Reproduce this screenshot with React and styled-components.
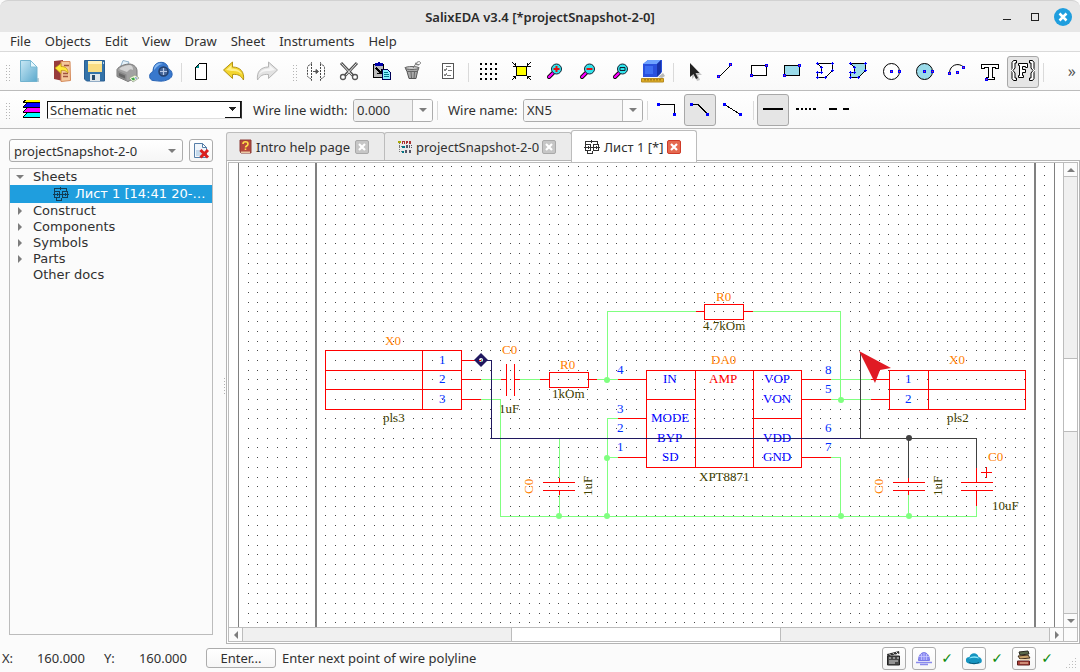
import React, { useState } from 'react';
import styled, { createGlobalStyle, css } from 'styled-components';

const chrome = '#fbfbfb';
const line = '#bcbcbc';
const softLine = '#dadada';
const ink = '#303030';
const accent = '#1f9ede';

const GlobalStyle = createGlobalStyle`
  * {
    box-sizing: border-box;
  }

  body {
    margin: 0;
    background: ${chrome};
    color: ${ink};
    font: 13px/16px "Noto Sans", "Open Sans", sans-serif;
  }

  button, input, select {
    font: inherit;
    color: inherit;
    margin: 0;
  }
`;

const Window = styled.div`
  display: flex;
  flex-direction: column;
  height: 100vh;
  min-height: 480px;
  background: ${chrome};
`;

const TitleBar = styled.header`
  display: grid;
  grid-template-columns: 1fr auto 1fr;
  align-items: center;
  height: 32px;
  flex: none;
  padding: 0 8px;
  background: #e7e7e7;
  border-top: 1px solid #d2d2d2;
  border-radius: 8px 8px 0 0;
`;

const Title = styled.h1`
  grid-column: 2;
  margin: 0;
  font-size: 13px;
  line-height: 16px;
  font-weight: 600;
  color: #2b2b2b;
`;

const WindowButtons = styled.div`
  display: flex;
  justify-content: flex-end;
  gap: 10px;
`;

const WindowButton = styled.button`
  width: 18px;
  height: 18px;
  padding: 0;
  border: 0;
  border-radius: 50%;
  background: ${(props) => (props.$close ? accent : 'transparent')};

  svg {
    display: block;
  }
`;

const MenuBar = styled.nav`
  display: flex;
  flex: none;
  height: 20px;
  padding-left: 3px;
  border-bottom: 1px solid ${softLine};
`;

const MenuItem = styled.button`
  padding: 0 7px 2px;
  border: 0;
  background: transparent;
  line-height: 16px;
`;

const ToolBar = styled.div`
  display: flex;
  align-items: center;
  flex: none;
  height: ${(props) => props.$height}px;
  padding: ${(props) => props.$top}px 0 0 5px;
  border-bottom: 1px solid ${line};
  background: linear-gradient(#ffffff, #f9f9f9);
  overflow: hidden;
`;

const Grip = styled.span`
  flex: none;
  width: 5px;
  height: 17px;
  margin: 0 3px 0 ${(props) => props.$before || 0}px;
  background: radial-gradient(circle, #b5b5b5 0 1px, transparent 1px) 0 0 / 3px 3px;
`;

const Separator = styled.span`
  flex: none;
  width: 1px;
  height: 19px;
  margin: 0 3px 0 4px;
  background: ${softLine};
`;

const ToolButton = styled.button`
  display: flex;
  flex: none;
  align-items: center;
  justify-content: center;
  width: 32px;
  height: 32px;
  margin-right: ${(props) => (props.$last ? 0 : 1)}px;
  padding: 0;
  border: 1px solid ${(props) => (props.$active ? '#a8a8a8' : 'transparent')};
  border-radius: 3px;
  background: ${(props) => (props.$active ? '#e5e5e5' : 'transparent')};
`;

const More = styled.button`
  margin: 0 4px 0 auto;
  padding: 0 0 3px;
  border: 0;
  background: transparent;
  font-size: 16px;
  line-height: 16px;
  color: #555;
`;

const LayerIcon = styled.span`
  display: flex;
  flex: none;
  width: 25px;
  margin-left: 9px;
  height: 20px;
`;

const NetSelect = styled.span`
  position: relative;
  flex: none;
  width: 195px;
  height: 18px;
  margin-right: 11px;
  border: 1px solid #111;
  border-right-color: #333;
  border-bottom-color: #ddd;
  background: #fff;

  select {
    display: block;
    appearance: none;
    width: 100%;
    height: 16px;
    padding: 0 0 0 2px;
    border: 0;
    background: transparent;
    line-height: 16px;
  }

  svg {
    position: absolute;
    right: 0;
    bottom: 0;
    pointer-events: none;
  }
`;

const FieldLabel = styled.label`
  flex: none;
  width: ${(props) => props.$width}px;
  padding-left: ${(props) => props.$indent || 0}px;
  white-space: nowrap;
`;

const ComboField = styled.span`
  display: flex;
  flex: none;
  width: ${(props) => props.$width}px;
  height: 23px;
  border: 1px solid #acacac;
  border-radius: 3px;
  overflow: hidden;
  background: #fff;

  input {
    flex: 1;
    min-width: 0;
    padding: 0 3px;
    border: 0;
    background: ${(props) => (props.$grey ? '#f1f1f1' : '#f7f7f7')};
  }

  button {
    width: 20px;
    padding: 0;
    border: 0;
    border-left: 1px solid ${line};
    background: ${chrome};
  }

  button svg {
    display: block;
    margin: auto;
  }
`;

const Body = styled.main`
  display: flex;
  flex: 1;
  min-height: 0;
`;

const Side = styled.aside`
  display: flex;
  flex-direction: column;
  flex: none;
  width: 226px;
  padding: 10px 13px 9px 9px;
`;

const SideHead = styled.div`
  display: flex;
  gap: 6px;
  margin-bottom: 6px;
`;

const ProjectSelect = styled.span`
  display: flex;
  align-items: center;
  flex: 1;
  height: 23px;
  border: 1px solid #acacac;
  border-radius: 3px;
  background: linear-gradient(#ffffff, #f6f6f6);

  select {
    appearance: none;
    flex: 1;
    min-width: 0;
    padding: 0 4px;
    border: 0;
    background: transparent;
  }

  svg {
    flex: none;
    margin-right: 6px;
  }
`;

const SmallButton = styled.button`
  display: flex;
  align-items: center;
  justify-content: center;
  flex: none;
  width: 24px;
  height: 23px;
  padding: 0;
  border: 1px solid #acacac;
  border-radius: 3px;
  background: linear-gradient(#ffffff, #f6f6f6);
`;

const Tree = styled.ul`
  flex: 1;
  margin: 0;
  padding: 0;
  list-style: none;
  border: 1px solid ${line};
  background: #fbfbfb;
  font-family: "DejaVu Sans", sans-serif;
`;

const TreeRow = styled.li`
  display: flex;
  align-items: center;
  height: ${(props) => (props.$selected ? 18 : 16)}px;
  padding-left: ${(props) => (props.$nested ? 43 : 6)}px;
  white-space: nowrap;
  ${(props) =>
    props.$selected &&
    css`
      background: ${accent};
      color: #fff;
    `}
`;

const Twisty = styled.span`
  display: flex;
  flex: none;
  width: 17px;
`;

const RowIcon = styled.span`
  display: flex;
  margin-right: 6px;
  color: #123c55;
`;

const Work = styled.section`
  display: flex;
  flex-direction: column;
  flex: 1;
  min-width: 0;
`;

// The strip overlaps the frame so that the active tab opens onto the sheet
const TabStrip = styled.div`
  display: flex;
  align-items: flex-end;
  flex: none;
  height: 33px;
  margin-bottom: -2px;
`;

const Tab = styled.div`
  display: flex;
  align-items: center;
  z-index: ${(props) => (props.$active ? 1 : 0)};
  width: ${(props) => props.$width}px;
  height: ${(props) => (props.$active ? 32 : 28)}px;
  margin-bottom: ${(props) => (props.$active ? 0 : 2)}px;
  margin-left: ${(props) => (props.$first ? 0 : -1)}px;
  padding-left: 12px;
  border: 1px solid ${line};
  border-bottom: 0;
  border-radius: 3px 3px 0 0;
  background: ${(props) => (props.$active ? '#ffffff' : '#ebebeb')};
`;

const TabLabel = styled.button`
  display: flex;
  align-items: center;
  gap: 4px;
  flex: none;
  padding: 0;
  border: 0;
  background: transparent;
  white-space: nowrap;

  svg {
    flex: none;
  }
`;

const TabClose = styled.button`
  display: flex;
  align-items: center;
  justify-content: center;
  flex: none;
  width: 14px;
  height: 14px;
  margin: 0 15px 0 auto;
  padding: 0;
  border: 1px solid ${(props) => (props.$active ? '#cf3a27' : '#a9a9a9')};
  border-radius: 2px;
  background: ${(props) => (props.$active ? '#e5694f' : '#c6c6c6')};
`;

const Frame = styled.div`
  flex: 1;
  min-height: 0;
  padding: 1px;
  border: 1px solid #b4b4b4;
  background: #fff;
`;

const Viewport = styled.div`
  display: grid;
  grid-template-columns: 1fr 14px;
  grid-template-rows: 1fr 14px;
  height: 100%;
  border: 1px solid ${line};
`;

const Canvas = styled.svg`
  display: block;
  width: 100%;
  height: 100%;
  min-width: 0;
  min-height: 0;
  overflow: hidden;
  font: 13px "Liberation Serif", serif;
`;

const ScrollBar = styled.div`
  display: flex;
  min-width: 0;
  min-height: 0;
  flex-direction: ${(props) => (props.$vertical ? 'column' : 'row')};
  border-${(props) => (props.$vertical ? 'left' : 'top')}: 1px solid ${line};
  background: #fbfbfb;
`;

const ScrollCorner = styled.div`
  border: solid ${line};
  border-width: 1px 0 0 1px;
  background: #fbfbfb;
`;

const ScrollArrow = styled.button`
  display: flex;
  align-items: center;
  justify-content: center;
  flex: none;
  width: 13px;
  height: 13px;
  padding: 0;
  border: 0;
  background: transparent;
`;

const Groove = styled.div`
  flex: ${(props) => props.$grow} 1 0;
  border: 0 solid ${line};
  border-width: ${(props) => (props.$vertical ? '1px 0' : '0 1px')};
  background: ${(props) => (props.$thumb ? '#ffffff' : '#f0f0f0')};
  ${(props) => props.$thumb && 'border-width: 0;'}
`;

const SplitHandle = styled.div`
  flex: none;
  align-self: center;
  width: 1px;
  height: 18px;
  margin-left: -2px;
  margin-right: 1px;
  background: repeating-linear-gradient(#b0b0b0 0 1px, transparent 1px 3px);
`;

const StatusBar = styled.footer`
  display: flex;
  align-items: center;
  flex: none;
  height: 28px;
  padding: 0 2px;
  white-space: nowrap;
`;

const Coordinate = styled.output`
  display: flex;
  justify-content: space-between;
  width: 83px;
  margin-right: 19px;
`;

const EnterButton = styled.button`
  width: 70px;
  height: 20px;
  margin-right: 6px;
  padding: 0;
  border: 1px solid #acacac;
  border-radius: 3px;
  background: linear-gradient(#ffffff, #f6f6f6);
  line-height: 16px;
`;

const StatusTools = styled.div`
  display: flex;
  align-items: center;
  margin-left: auto;
`;

const Check = styled.span`
  width: 26px;
  padding-right: 4px;
  text-align: center;
  font: 14px/16px "DejaVu Sans", sans-serif;
  color: #0a8a0a;
`;

const StatusButton = styled(SmallButton)`
  margin-right: ${(props) => (props.$gap ? 6 : 0)}px;
`;

const SizeGrip = styled.svg`
  flex: none;
  margin-left: 3px;
  align-self: flex-end;
`;

const Icon = ({ children, size = 24, height, crisp }) => (
  <svg
    width={size}
    height={height || size}
    viewBox={`0 0 ${size} ${height || size}`}
    fill="none"
    shapeRendering={crisp ? 'crispEdges' : undefined}
    aria-hidden="true"
  >
    {children}
  </svg>
);

const Caret = ({ dir = 'down', size = 8, color = '#7d7d7d' }) => (
  <svg width={size} height={size} viewBox="0 0 8 8" fill={color} aria-hidden="true">
    {dir === 'down' && <path d="M0 2h8L4 6z" />}
    {dir === 'up' && <path d="M0 6h8L4 2z" />}
    {dir === 'left' && <path d="M6 0v8L2 4z" />}
    {dir === 'right' && <path d="M2 0v8l4-4z" />}
  </svg>
);

// Small square handle drawn at the vertices of the drawing tools
const Knob = ({ x, y, red }) => (
  <g shapeRendering="crispEdges">
    <rect x={x - 1} y={y - 1} width="3" height="3" fill="#00f" />
    {red && <rect x={x} y={y} width="1" height="1" fill="#f33" />}
  </g>
);

const Lens = ({ children }) => (
  <Icon>
    <path d="M7 17l4-4" stroke="#000" strokeWidth="4" strokeLinecap="round" />
    <path d="M7 17l4-4" stroke="#f0f" strokeWidth="2.400" strokeLinecap="round" />
    <circle cx="14.500" cy="9" r="5" fill="#2fe3ea" stroke="#123" />
    {children}
  </Icon>
);

const polyOutline = 'M4.500 3.500h15v7l-7 7h-8v-5h4v-5z';
const polyHandles =
  'M3 3.500h3M4.500 2v3M18 3.500h3M19.500 2v3M18 10.500h3M19.500 9v3M11 17.500h3M12.500 16v3M3 17.500h3M4.500 16v3M3 12.500h3M4.500 11v3M7 12.500h3M8.500 11v3M7 7.500h3M8.500 6v3';

const icons = {
  new: (
    <Icon>
      <defs>
        <linearGradient id="page" x1="0" y1="0" x2="1" y2="1">
          <stop offset="0" stopColor="#c9e8f5" />
          <stop offset="1" stopColor="#5ba9cd" />
        </linearGradient>
      </defs>
      <path d="M5 20l17-2v4H5z" fill="#b9cdd5" />
      <path d="M3.500.500h10l6.500 6.500v14.500h-16.500z" fill="url(#page)" stroke="#72b3cf" />
      <path d="M13.500.500V7H20z" fill="#e6f7fd" stroke="#7dbcd6" />
    </Icon>
  ),
  close: (
    <Icon>
      <path d="M4 1l9-1v21l-9-2z" fill="#983c3c" />
      <path d="M11 1.500h9l.5 19-9.500 1z" fill="#f4c79a" stroke="#d58a5a" />
      <path d="M13 13.500h5M13 16.500h5M14 5.500h5" stroke="#a0523c" strokeWidth="1.500" />
      <path d="M5 8l6-4.500v3c5 0 7 2.500 7 6.500-2-2.500-4-3-7-2.500v3z" fill="#ffe93b" stroke="#c29a18" strokeWidth=".8" />
    </Icon>
  ),
  save: (
    <Icon>
      <path d="M1.500.500h20v20.500h-18l-2-2z" fill="#3473a9" stroke="#2a5f92" />
      <path d="M5 1h14v11H5z" fill="#f9dd82" />
      <path d="M5 1h14v3H5z" fill="#fff4be" />
      <path d="M7 14h10v7H7z" fill="#dfe6ea" />
      <path d="M9 15h3v5H9z" fill="#274b6b" />
      <path d="M20 2h1v2h-1z" fill="#bcd6ec" />
    </Icon>
  ),
  print: (
    <Icon>
      <path d="M4 8l3-7.500L13 2l-3 7z" fill="#e6f2fa" stroke="#91b1c8" />
      <path d="M1 9.500C3 6 9 4 14 4c5 1 7 4 7 7v6l-9 4.500-11-5z" fill="#a2a2a2" stroke="#777" />
      <path d="M3 9c3-3 8-4 11-4 3 1 3 3 3 5-3-2-4 0-6 2z" fill="#d3d3d3" />
      <path d="M1.500 10.500l9 4v6l-9-4z" fill="#8a8a8a" />
      <path d="M3 13l6 2.500v3L3 16z" fill="#666" />
      <path d="M13 18l6-3 4 3-6 4z" fill="#eef5d8" stroke="#8d9a86" strokeWidth=".7" />
      <path d="M15 18.500l3-1 1 2-2 1z" fill="#3aa648" />
      <path d="M19 17l2 1-1 1z" fill="#3661dd" />
    </Icon>
  ),
  cloud: (
    <Icon>
      <path d="M4 20.500c-4-.5-5-7 0-9 0-7 5-10 10-9 4 1 5 4 5 6 5 2 6 9 0 11-5 2.500-9 1.500-15 1z" fill="#3878cd" stroke="#2864b5" />
      <path d="M5 10c0-6 5-8 9-6-4 0-6 3-9 6z" fill="#83b6f0" />
      <circle cx="14.500" cy="11.500" r="4.500" fill="#46679b" stroke="#24406d" strokeWidth="1.500" />
      <path d="M14.500 8v7M11 11.500h7" stroke="#b8c9e6" strokeWidth="1.200" />
    </Icon>
  ),
  blank: (
    <Icon crisp>
      <path d="M10.500 3.500h7v16h-11v-12z" fill="#fff" stroke="#000" />
      <path d="M7 7l3-3v4H7z" fill="#088" />
    </Icon>
  ),
  undo: (
    <Icon>
      <path d="M1.500 10l9-8v5c8 0 12 5 11 13-3-4.500-5-6-11-5.500v4z" fill="#f3d52e" stroke="#b39314" />
      <path d="M4 10l5.500-5v3.500c5 0 9 2 10.500 6-3-3-6-4-10.500-3.500z" fill="#fff08a" />
    </Icon>
  ),
  redo: (
    <Icon>
      <path d="M22.500 10l-9-8v5c-8 0-12 5-11 13 3-4.500 5-6 11-5.500v4z" fill="#e2e2e2" stroke="#b5b5b5" />
      <path d="M20 10l-5.500-5v3.500c-5 0-9 2-10.500 6 3-3 6-4 10.500-3.500z" fill="#f6f6f6" />
    </Icon>
  ),
  mirror: (
    <Icon>
      <path d="M7.500 2.500c0 3-4 2-4 5v8c0 3 4 2 4 5zM16.500 2.500c0 3 4 2 4 5v8c0 3-4 2-4 5z" fill="#fff" stroke="#444" strokeDasharray="2 1" />
      <path d="M9 11.500h4M12 9.500v4l2.500-2z" fill="#555" stroke="#555" />
    </Icon>
  ),
  cut: (
    <Icon>
      <path d="M4 3l12.500 13M20 3L7.500 16" stroke="#4f4f4f" strokeWidth="3" />
      <path d="M4.500 3.500l11 12M19.500 3.500l-11 12" stroke="#eee" />
      <circle cx="6" cy="17" r="2.500" fill="#fff" stroke="#555" strokeWidth="1.300" />
      <circle cx="18" cy="17" r="2.500" fill="#fff" stroke="#555" strokeWidth="1.300" />
    </Icon>
  ),
  paste: (
    <Icon crisp>
      <path d="M3.500 4.500h10v13h-10z" fill="#bbb" stroke="#000" />
      <path d="M5 3.500h7v2H5zM7.500 2.500h2" stroke="#00a" fill="#00a" />
      <path d="M6 8l5 5M11.500 9v4.500H7" stroke="#000" strokeWidth="1.500" />
      <path d="M12.500 9.500h5l3 3v7h-8z" fill="#8ef" stroke="#005" />
      <path d="M14 12.500h4M14 14.500h5M14 16.500h5" stroke="#007a8a" />
    </Icon>
  ),
  brush: (
    <Icon>
      <path d="M2 7.500h14l-1.500 4-1.500 7H6l-2-7z" fill="#aaa" stroke="#555" />
      <ellipse cx="9" cy="8" rx="7" ry="1.500" fill="#ccc" stroke="#666" />
      <path d="M4 11.500h11M8 12l.5 6M11.500 12l-.5 6" stroke="#666" />
      <path d="M10 8l3-4.500c1-2 4-2.500 4.500-1s-2 3-4.500 2M12 3l4 2" stroke="#777" />
    </Icon>
  ),
  list: (
    <Icon crisp>
      <path d="M6.500 3.500h11v15h-11z" fill="#fff" stroke="#555" />
      <path d="M10 6.500h5M12 10.500h4M11 15.500h4" stroke="#777" />
      <path d="M8 9l1 2 2-3M8 14l1 2 2-3" stroke="#888" />
    </Icon>
  ),
  grid: (
    <Icon crisp>
      <path d="M4 4h18M4 9h18M4 14h18M4 19h18" stroke="#000" strokeWidth="2" strokeDasharray="2 3" />
    </Icon>
  ),
  fit: (
    <Icon crisp>
      <path d="M7.500 6.500h10v9h-10z" fill="#ff0" stroke="#000" />
      <path d="M3 2l4 4M6.500 3v3H4M22 2l-4 4M18.500 3v3h3M3 20l4-4M6.500 19v-3H4M22 20l-4-4M18.500 19v-3h3" stroke="#000" />
    </Icon>
  ),
  zoomIn: (
    <Lens>
      <path d="M11.500 9h6M14.500 6v6" stroke="#e01010" strokeWidth="2" />
    </Lens>
  ),
  zoomOut: (
    <Lens>
      <path d="M11.500 9h6" stroke="#e01010" strokeWidth="2" />
    </Lens>
  ),
  zoomFit: (
    <Lens>
      <path d="M12 7.500h5v3h-5z" stroke="#123" />
    </Lens>
  ),
  cube: (
    <Icon>
      <path d="M2 4l5-4h14v12l-5 5H2z" fill="#2950dd" />
      <path d="M2 4l5-4h13l-4 4z" fill="#6da2ff" />
      <path d="M16 4l4-4v13l-4 4z" fill="#1733a8" />
      <path d="M4 6h8v8H4z" fill="#3c6df2" />
      <path d="M17 17l5-4 2 3-3 2z" fill="#b8b8b8" />
      <path d="M.500 18.500h22v3.500h-22z" fill="#e0ad24" stroke="#b58a20" />
      <path d="M4 19v1.500M7 19v1.500M10 19v1.500M13 19v1.500M16 19v1.500M19 19v1.500" stroke="#6e5213" />
    </Icon>
  ),
  pointer: (
    <Icon>
      <path d="M11 5v14l3-3 2 5 3-1-2-5h4z" fill="#c4c4c4" />
      <path d="M9 3v14l3.500-3 2.500 5 2-1-2.500-5h4z" fill="#222" />
    </Icon>
  ),
  lineTool: (
    <Icon crisp>
      <path d="M4 18L17 5" stroke="#000" />
      <Knob x={4} y={16} red />
      <Knob x={16} y={4} red />
    </Icon>
  ),
  rect: (
    <Icon crisp>
      <path d="M4.500 5.500h15v10h-15z" fill="#fff" stroke="#000" />
      <Knob x={4} y={15} red />
      <Knob x={19} y={5} red />
    </Icon>
  ),
  rectFill: (
    <Icon crisp>
      <path d="M4.500 5.500h15v10h-15z" fill="#9adbea" stroke="#000" />
      <Knob x={4} y={15} red />
      <Knob x={19} y={5} red />
    </Icon>
  ),
  poly: (
    <Icon crisp>
      <path d={polyOutline} fill="#fff" stroke="#000" />
      <path d={polyHandles} stroke="#00f" />
    </Icon>
  ),
  polyFill: (
    <Icon crisp>
      <path d={polyOutline} fill="#9adbea" stroke="#000" />
      <path d={polyHandles} stroke="#00f" />
    </Icon>
  ),
  circle: (
    <Icon>
      <circle cx="12.500" cy="11.500" r="8" fill="#fff" stroke="#000" />
      <Knob x={12} y={11} red />
      <Knob x={20} y={11} red />
    </Icon>
  ),
  circleFill: (
    <Icon>
      <circle cx="12.500" cy="11.500" r="8" fill="#9adbea" stroke="#000" />
      <Knob x={12} y={11} red />
      <Knob x={20} y={11} red />
    </Icon>
  ),
  arc: (
    <Icon>
      <path d="M4.500 13c0-8 9-11 14-6" stroke="#000" />
      <Knob x={4} y={13} red />
      <Knob x={12} y={12} red />
      <Knob x={18} y={7} red />
    </Icon>
  ),
  text: (
    <Icon crisp>
      <path d="M3.500 4.500h17v4h-3v-1h-3v10h2v2h-8v-2h2v-10h-4v1h-3z" fill="#fff" stroke="#000" />
      <Knob x={8} y={19} red />
    </Icon>
  ),
  formula: (
    <Icon>
      <path d="M5.500.500h-3l-1.500 2v6l-2 2 2 2v6l1.500 2h3v-2.500H4V13l-2-2.500L4 8V3h1.500zM18.500.500h3l1.500 2v6l2 2-2 2v6l-1.500 2h-3v-2.500H20V13l2-2.500L20 8V3h-1.500z" fill="#fff" stroke="#000" />
      <path d="M7.500 3.500h9v4h-2v-1h-3v3h3v3h-3v3h1v2h-5v-2h1v-10h-1z" fill="#fff" stroke="#000" />
    </Icon>
  ),
  wireCorner: (
    <Icon crisp>
      <path d="M3 6.500h16.500v10" stroke="#000" />
      <Knob x={3} y={6} />
      <Knob x={19} y={16} />
    </Icon>
  ),
  wireAngle: (
    <Icon crisp>
      <path d="M3 6.500h7l10 10" stroke="#000" />
      <Knob x={3} y={6} />
      <Knob x={19} y={16} />
    </Icon>
  ),
  wireFree: (
    <Icon crisp>
      <path d="M3 6l17 11" stroke="#000" />
      <Knob x={3} y={6} />
      <Knob x={19} y={16} />
    </Icon>
  ),
  solid: (
    <Icon crisp>
      <path d="M2 11h20" stroke="#000" strokeWidth="2" />
    </Icon>
  ),
  dotted: (
    <Icon crisp>
      <path d="M2 11h20" stroke="#000" strokeWidth="2" strokeDasharray="3 2 2 2 2 2 2 2 3 2" />
    </Icon>
  ),
  dashed: (
    <Icon crisp>
      <path d="M2 11h8M16 11h6" stroke="#000" strokeWidth="2" />
    </Icon>
  ),
};

const sheetGlyph = (
  <Icon size={16} crisp>
    <path d="M1.500 6v-3.500h12V6M0 8.500h16M3.500 12v2.500h5V12M7.500 1v3" stroke="currentColor" />
    <path d="M1.500 5.500h5v6h-5zM9.500 5.500h5v6h-5zM4 7v3M12 7v3" stroke="currentColor" />
  </Icon>
);

const bookGlyph = (
  <Icon size={13} height={15}>
    <path d="M1 1h11v13H2l-1-2z" fill="#b5483c" stroke="#8a3a34" />
    <path d="M2 12.500h9v1.500H2z" fill="#eac9a5" />
    <path d="M4 5c0-3 5-3 5 0 0 2-2.500 2-2.500 3.500M6.500 9.500v1.500" stroke="#ffe14a" strokeWidth="1.600" />
  </Icon>
);

const projectGlyph = (
  <Icon size={15} height={14} crisp>
    <path d="M2.500 1v11M2 6.500h4M2 11.500h4" stroke="#777" strokeDasharray="1 1" />
    <path d="M1 1.500h3" stroke="#aa0" strokeWidth="2" />
    <path d="M5.500 4V1.500h2V4M9.500 4V1.500h1V3M12.500 1.500h1V3h-1z" stroke="#a33" />
    <path d="M5 6.500h3" stroke="#078" strokeWidth="2" />
    <path d="M9.500 5.500h1v2h-1zM12.500 5v3M14 5v1M14 7v1M8.500 13v-2.500h1V13M12.500 13v-2.500h1V13" stroke="#556" />
    <path d="M5 11.500h2" stroke="#078" strokeWidth="2" />
  </Icon>
);

const removeGlyph = (
  <Icon size={18}>
    <path d="M2.500 1.500h8l4 4v10h-12z" fill="#f0f6fc" stroke="#567ea8" />
    <path d="M4 8h6v6H4z" fill="#c4d9eb" />
    <path d="M10.500 1.500v4h4z" fill="#fff" stroke="#567ea8" />
    <path d="M8.500 8l7.500 7.500M16 8l-7.500 7.500" stroke="#db1f1f" strokeWidth="3" />
  </Icon>
);

const fileTools = ['new', 'close', 'save', 'print', 'cloud', '|', 'blank', 'undo', 'redo'];
const drawTools = [
  'mirror', 'cut', 'paste', 'brush', 'list', '|',
  'grid', 'fit', 'zoomIn', 'zoomOut', 'zoomFit', 'cube', '|',
  'pointer', 'lineTool', 'rect', 'rectFill', 'poly', 'polyFill', 'circle', 'circleFill', 'arc', 'text', 'formula', '|',
];
const wireModes = ['wireCorner', 'wireAngle', 'wireFree'];
const lineStyles = ['solid', 'dotted', 'dashed'];
const menus = ['File', 'Objects', 'Edit', 'View', 'Draw', 'Sheet', 'Instruments', 'Help'];

const Tools = ({ names, active, onPick }) =>
  names.map((name, i) =>
    name === '|' ? (
      <Separator key={`sep${i}`} />
    ) : (
      <ToolButton
        key={name}
        type="button"
        aria-label={name}
        $active={name === active}
        $last={names[i + 1] === '|' || i === names.length - 1}
        onClick={() => onPick && onPick(name)}
      >
        {icons[name]}
      </ToolButton>
    )
  );

const dots = (() => {
  const out = [];
  for (let r = 0; r < 48; r += 1) {
    for (let c = 0; c < 83; c += 1) {
      const x = Math.floor(248 + c * 9.71);
      const y = Math.floor(166.2 + r * 9.715);
      out.push(`M${x} ${y}h1v1h-1z`);
    }
  }
  return out.join('');
})();

const greenWires = [
  'M481 379H501', 'M520 379H540', 'M597 379H618', 'M481 399H500V516H976V506',
  'M559 438V478', 'M559 495V516', 'M607 379V311H696', 'M753 311H840V399',
  'M618 418H607V516', 'M607 457H618', 'M831 379H871', 'M831 399H871',
  'M831 457H840V516', 'M908 495V516',
].join('');

const redShapes = [
  'M325 350H461V409H325zM325 370H461M325 389H461M422 350V409',
  'M461 360H481M461 379H480M461 399H480',
  'M501 379H506M506 364V395M514 364V395M514 379H519',
  'M540 379H549M549 372H588V387H549zM588 379H596',
  'M696 311H704M704 304H743V319H704zM743 311H752',
  'M646 370H801V467H646zM695 370V467M753 370V467M646 399H695M753 418H801',
  'M618 379H646M618 418H646M618 457H646M801 379H830M801 399H830M801 457H830',
  'M871 379H889M871 399H889M889 370H1025V409H889zM889 389H1025M928 370V409',
  'M559 478V482M543 482H574M543 490H574M559 490V494',
  'M908 478V482M893 482H924M893 490H924M908 490V494',
  'M976 468V482M961 482H992M961 490H992M976 490V505M981 472H991M986 467V477',
].join('');

const orange = '#ff8000';
const olive = '#404000';
const blue = '#0000ff';
const pin = '#0030ff';

const labels = [
  [385, 345, 'X0', orange], [439, 364, '1', pin], [439, 383, '2', pin], [439, 403, '3', pin],
  [383, 422, 'pls3', olive], [502, 354, 'C0', orange], [499, 413, '1uF', olive],
  [560, 369, 'R0', orange], [552, 398, '1kOm', olive], [716, 301, 'R0', orange],
  [703, 330, '4.7kOm', olive], [711, 364, 'DA0', orange], [617, 374, '4', pin],
  [617, 413, '3', pin], [617, 432, '2', pin], [617, 451, '1', pin], [663, 383, 'IN', blue],
  [709, 383, 'AMP', '#ff0000'], [764, 383, 'VOP', blue], [763, 403, 'VON', blue],
  [651, 422, 'MODE', blue], [657, 442, 'BYP', blue], [763, 442, 'VDD', blue],
  [662, 461, 'SD', blue], [763, 461, 'GND', blue], [825, 374, '8', pin], [825, 393, '5', pin],
  [825, 432, '6', pin], [825, 451, '7', pin], [699, 481, 'XPT8871', olive],
  [949, 364, 'X0', orange], [905, 383, '1', pin], [905, 403, '2', pin], [947, 422, 'pls2', olive],
  [988, 461, 'C0', orange], [992, 510, '10uF', olive],
];

const uprightLabels = [
  [533, 494, 'C0', orange], [592, 496, '1uF', olive], [883, 494, 'C0', orange], [942, 496, '1uF', olive],
];

const junctions = [[607, 380], [607, 458], [607, 516], [559, 516], [841, 400], [841, 516], [909, 516]];

const Schematic = () => (
  <Canvas role="img" aria-label="Schematic sheet">
    <g transform="translate(-229 -163)">
      <path d={dots} fill="#484848" shapeRendering="crispEdges" />
      <g fill="#808080" shapeRendering="crispEdges">
        <rect x="238" y="0" width="1" height="4000" />
        <rect x="315" y="0" width="2" height="4000" />
        <rect x="1034" y="0" width="2" height="4000" />
        <rect x="1054" y="0" width="1" height="4000" />
      </g>
      {labels.map(([x, y, text, fill]) => (
        <text key={`${x}-${y}`} x={x} y={y} fill={fill}>{text}</text>
      ))}
      {uprightLabels.map(([x, y, text, fill]) => (
        <text key={`${x}-${y}`} transform={`translate(${x} ${y}) rotate(-90)`} fill={fill}>{text}</text>
      ))}
      <g transform="translate(.5 .5)" fill="none" strokeLinecap="square" shapeRendering="crispEdges">
        <path d={greenWires} stroke="#80ff80" />
        <path d={redShapes} stroke="#ff0000" />
        <path d="M860 352V438H976V467M908 438V477" stroke="#404040" />
        <path d="M481 360H491V438H860" stroke="#201860" />
      </g>
      {junctions.map(([x, y]) => (
        <circle key={`${x}-${y}`} cx={x} cy={y} r="3" fill="#80ff80" />
      ))}
      <circle cx="909" cy="438" r="3" fill="#404040" />
      <path d="M481 353l7 7-7 7-7-7z" fill="#201860" />
      <circle cx="481" cy="360" r="2" fill="#fff" />
      <path d="M479 360h2v1h-2z" fill="#ff0000" />
      <path d="M481 359h1v3h-1z" fill="#80c080" />
      <path d="M859 351l32 17-11 2-5 13z" fill="#e01b24" />
    </g>
  </Canvas>
);

const Cross = () => (
  <Icon size={8}>
    <path d="M1 1l6 6M7 1L1 7" stroke="#fff" strokeWidth="2.200" />
  </Icon>
);

const App = () => {
  const [tool, setTool] = useState('formula');
  const [mode, setMode] = useState('wireAngle');
  const [stroke, setStroke] = useState('solid');

  return (
    <Window>
      <GlobalStyle />
      <TitleBar>
        <Title>SalixEDA v3.4 [*projectSnapshot-2-0]</Title>
        <WindowButtons>
          <WindowButton type="button" aria-label="Minimize">
            <Icon size={18} crisp><path d="M5 11.500h8" stroke="#222" /></Icon>
          </WindowButton>
          <WindowButton type="button" aria-label="Maximize">
            <Icon size={18} crisp><path d="M5.500 5.500h7v7h-7z" stroke="#222" /></Icon>
          </WindowButton>
          <WindowButton type="button" aria-label="Close" $close>
            <Icon size={18}><path d="M5.500 5.500l7 7M12.500 5.500l-7 7" stroke="#fff" strokeWidth="2.500" /></Icon>
          </WindowButton>
        </WindowButtons>
      </TitleBar>

      <MenuBar>
        {menus.map((name) => <MenuItem key={name} type="button">{name}</MenuItem>)}
      </MenuBar>

      <ToolBar $height={39} $top={2}>
        <Grip />
        <Tools names={fileTools} active={tool} onPick={setTool} />
        <Grip $before={9} />
        <Tools names={drawTools} active={tool} onPick={setTool} />
        <More type="button" aria-label="More tools">»</More>
      </ToolBar>

      <ToolBar $height={38} $top={1}>
        <Grip />
        <LayerIcon>
          <Icon size={18} height={20} crisp>
            <path d="M4 0h14v2H1z" fill="#ff0" />
            <path d="M6 3h12v4H1z" fill="#00f" />
            <path d="M6 8h12v4H1z" fill="#f0f" />
            <path d="M6 13h12v4H1z" fill="#0ff" />
            <path d="M1 2.500h17M1 7.500h17M1 12.500h17M1 17.500h17M5 3L1 7M5 8l-4 4M5 13l-4 4M4 0L1 2" stroke="#000" />
          </Icon>
        </LayerIcon>
        <NetSelect>
          <select aria-label="Layer" defaultValue="Schematic net">
            <option>Schematic net</option>
          </select>
          <Icon size={16} crisp>
            <path d="M0 15.500h15.500V0" stroke="#111" />
            <path d="M4 5h7l-3.500 4z" fill="#222" />
          </Icon>
        </NetSelect>
        <FieldLabel htmlFor="wire-width" $width={100}>Wire line width:</FieldLabel>
        <ComboField $width={80} $grey>
          <input id="wire-width" defaultValue="0.000" />
          <button type="button" aria-label="Choose width"><Caret /></button>
        </ComboField>
        <Separator />
        <FieldLabel htmlFor="wire-name" $width={82} $indent={7}>Wire name:</FieldLabel>
        <ComboField $width={120}>
          <input id="wire-name" defaultValue="XN5" />
          <button type="button" aria-label="Choose name"><Caret /></button>
        </ComboField>
        <Separator />
        <Tools names={wireModes} active={mode} onPick={setMode} />
        <Separator />
        <Tools names={lineStyles} active={stroke} onPick={setStroke} />
      </ToolBar>

      <Body>
        <Side>
          <SideHead>
            <ProjectSelect>
              <select aria-label="Project" defaultValue="projectSnapshot-2-0">
                <option>projectSnapshot-2-0</option>
              </select>
              <Caret />
            </ProjectSelect>
            <SmallButton type="button" aria-label="Close project">{removeGlyph}</SmallButton>
          </SideHead>
          <Tree role="tree">
            <TreeRow role="treeitem"><Twisty><Caret /></Twisty>Sheets</TreeRow>
            <TreeRow role="treeitem" $selected $nested>
              <RowIcon>{sheetGlyph}</RowIcon>
              Лист 1 [14:41 20-…
            </TreeRow>
            {['Construct', 'Components', 'Symbols', 'Parts'].map((name) => (
              <TreeRow key={name} role="treeitem">
                <Twisty><Caret dir="right" /></Twisty>
                {name}
              </TreeRow>
            ))}
            <TreeRow role="treeitem"><Twisty />Other docs</TreeRow>
          </Tree>
        </Side>
        <SplitHandle />
        <Work>
          <TabStrip role="tablist">
            <Tab $width={159} $first>
              <TabLabel type="button" role="tab">{bookGlyph}Intro help page</TabLabel>
              <TabClose type="button" aria-label="Close tab"><Cross /></TabClose>
            </Tab>
            <Tab $width={188}>
              <TabLabel type="button" role="tab">{projectGlyph}projectSnapshot-2-0</TabLabel>
              <TabClose type="button" aria-label="Close tab"><Cross /></TabClose>
            </Tab>
            <Tab $width={126} $active>
              <TabLabel type="button" role="tab">{sheetGlyph}Лист 1 [*]</TabLabel>
              <TabClose type="button" aria-label="Close tab" $active><Cross /></TabClose>
            </Tab>
          </TabStrip>
          <Frame>
            <Viewport>
              <Schematic />
              <ScrollBar $vertical>
                <ScrollArrow type="button" aria-label="Scroll up"><Caret dir="up" /></ScrollArrow>
                <Groove $vertical $grow={183} />
                <Groove $vertical $grow={72} $thumb />
                <Groove $vertical $grow={183} />
                <ScrollArrow type="button" aria-label="Scroll down"><Caret /></ScrollArrow>
              </ScrollBar>
              <ScrollBar>
                <ScrollArrow type="button" aria-label="Scroll left"><Caret dir="left" /></ScrollArrow>
                <Groove $grow={269} />
                <Groove $grow={269} $thumb />
                <Groove $grow={269} />
                <ScrollArrow type="button" aria-label="Scroll right"><Caret dir="right" /></ScrollArrow>
              </ScrollBar>
              <ScrollCorner />
            </Viewport>
          </Frame>
        </Work>
      </Body>

      <StatusBar>
        <Coordinate><span>X:</span><span>160.000</span></Coordinate>
        <Coordinate><span>Y:</span><span>160.000</span></Coordinate>
        <EnterButton type="button">Enter...</EnterButton>
        <span>Enter next point of wire polyline</span>
        <StatusTools>
          <StatusButton type="button" aria-label="Movie" $gap>
            <Icon size={16}>
              <path d="M1.500 6h12v9h-12z" fill="#4a4a4a" stroke="#222" />
              <path d="M1 4l12-3 .5 2.500L1.500 6.500z" fill="#333" />
              <path d="M3 3.500l2 2M6.500 2.700l2 2M10 2l2 2M3 8h2M7 8h2M11 8h2M3 11h9M3 13h6" stroke="#ddd" />
            </Icon>
          </StatusButton>
          <StatusButton type="button" aria-label="Server">
            <Icon size={16}>
              <path d="M2.500 10.500C2.500 0 13.500 0 13.500 10.500z" fill="#8b8bf2" stroke="#7777e8" />
              <path d="M8 3v7M3 6.500h10M5.500 4v6M10.500 4v6" stroke="#c9c9ff" strokeWidth=".8" />
              <path d="M0 12.500h16M4 14.500h8" stroke="#8a8aec" strokeWidth="1.500" />
            </Icon>
          </StatusButton>
          <Check>✓</Check>
          <StatusButton type="button" aria-label="Cloud">
            <Icon size={16}>
              <path d="M1.500 13c-3-2-2-6 2-6 1-5 8-5 9 0 4 1 4 5 2 6-3 1.500-10 1.500-13 0z" fill="#1594c0" />
              <path d="M3 8.500c2-3 9-3 10 0-3-1-7-1-10 0z" fill="#8be8fb" />
              <path d="M3 12.500c3 1.500 7 1.500 10 0" stroke="#0b5778" />
            </Icon>
          </StatusButton>
          <Check>✓</Check>
          <StatusButton type="button" aria-label="Library">
            <Icon size={16}>
              <path d="M3 2l9-1 1 3-9 1z" fill="#5c6a4a" stroke="#2b2b20" />
              <path d="M2 6l10-1 2 3-10 1z" fill="#caa46b" stroke="#3e2c1a" />
              <path d="M1.500 11h12v4h-12z" fill="#b0413a" stroke="#5a1e1a" />
              <path d="M4 9.500h10M4 13h8" stroke="#ecd6b0" />
            </Icon>
          </StatusButton>
          <Check>✓</Check>
          <SizeGrip width="13" height="13" viewBox="0 0 13 13" fill="#bdbdbd" aria-hidden="true">
            <path d="M10 1h1v1h-1zM7 4h1v1H7zM10 4h1v1h-1zM4 7h1v1H4zM7 7h1v1H7zM10 7h1v1h-1zM1 10h1v1H1zM4 10h1v1H4zM7 10h1v1H7zM10 10h1v1h-1z" />
          </SizeGrip>
        </StatusTools>
      </StatusBar>
    </Window>
  );
};

export default App;
